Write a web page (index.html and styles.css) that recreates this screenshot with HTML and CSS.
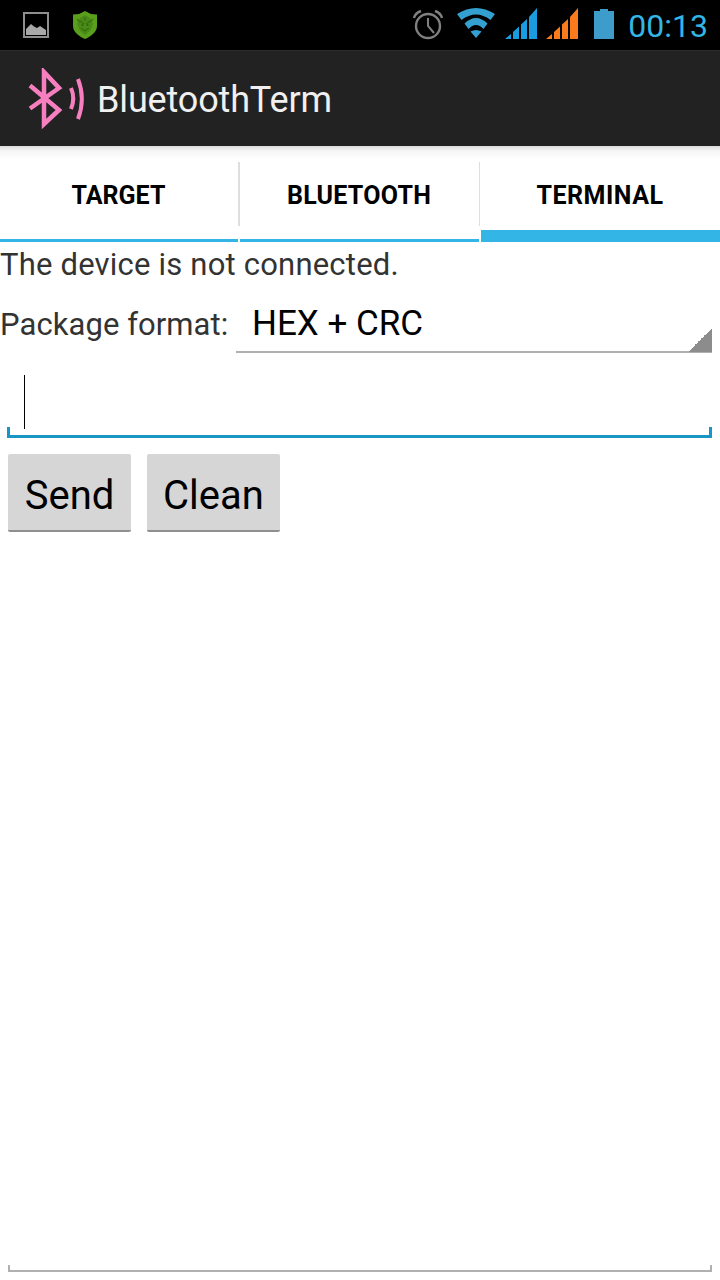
FILE: index.html
```html
<!DOCTYPE html>
<html lang="en">
<head>
<meta charset="utf-8">
<title>BluetoothTerm</title>
<link rel="stylesheet" href="styles.css">
</head>
<body>
<div class="screen">
  <header class="status-bar">
    <svg class="ico-picture" width="28" height="28" viewBox="0 0 28 28"><rect x="2" y="2" width="24" height="24" fill="none" stroke="#8f8f8f" stroke-width="2"/><path d="M4 24V18L9 13L12 15.500L15 17L18 15L21 17L24 19V24Z" fill="#a8a8a8"/></svg>
    <svg class="ico-shield" width="26" height="28" viewBox="0 0 26 28"><path d="M13 0L19 3L25 3.500V15C25 21 19 25.500 13 28C7 25.500 1 21 1 15V3.500L7 3Z" fill="#5a9f1b"/><path d="M13 4L18 7L21 13L18 20L13 24L8 20L5 13L8 7Z" fill="#4a8a18"/><path d="M8 10L12 13M18 10L14 13M9 17L13 20L17 17M13 6V10M5 8L8 11M21 8L18 11" stroke="#37700f" stroke-width="1.200" fill="none"/><circle cx="10.500" cy="14" r="1" fill="#2f6410"/><circle cx="15.500" cy="14" r="1" fill="#2f6410"/></svg>
    <span class="status-spacer"></span>
    <svg class="ico-alarm" width="32" height="32" viewBox="0 0 32 32"><circle cx="16" cy="17" r="12" fill="none" stroke="#808080" stroke-width="2.400"/><path d="M16 9V17L22 24" fill="none" stroke="#808080" stroke-width="2"/><path d="M2 9C3 5 6 3 9 2M30 9C29 5 26 3 23 2" fill="none" stroke="#808080" stroke-width="2.400"/></svg>
    <svg class="ico-wifi" width="38" height="30" viewBox="0 0 38 30"><path d="M0 6Q19 -6 38 6L33.500 12Q19 1 4.500 12Z" fill="#33a0cf"/><path d="M7.500 15.500Q19 4.500 30.500 15.500L26.500 21Q19 13 11.500 21Z" fill="#33a0cf"/><path d="M13.500 23.500Q19 20.500 24.500 23.500L19 30Z" fill="#33a0cf"/></svg>
    <svg class="ico-signal" width="32" height="31" viewBox="0 0 32 31"><path d="M0 31L6 26V31ZM8 31V24L14 18.500V31ZM16 31V16.500L22 11V31ZM24 31V9L32 0V31Z" fill="#1a9de0"/></svg>
    <svg class="ico-signal ico-signal-two" width="32" height="31" viewBox="0 0 32 31"><path d="M0 31L6 26V31ZM8 31V24L14 18.500V31ZM16 31V16.500L22 11V31ZM24 31V9L32 0V31Z" fill="#fb7a1c"/></svg>
    <svg class="ico-battery" width="20" height="30" viewBox="0 0 20 30"><path d="M6 0H14V2H20V30H0V2H6Z" fill="#3d9cc9"/></svg>
    <span class="clock">00:13</span>
  </header>

  <div class="action-bar">
    <svg class="app-icon" width="60" height="62" viewBox="0 0 60 62"><path d="M2 40.500L31 20L16 4V56L31 42L2 17.500" fill="none" stroke="#f87fbf" stroke-width="4.500"/><path d="M43 20C46 27 46 34 43 41" fill="none" stroke="#f87fbf" stroke-width="4"/><path d="M50 11C55 24 55 38 50 51" fill="none" stroke="#f87fbf" stroke-width="4"/></svg>
    <span class="app-title">BluetoothTerm</span>
  </div>

  <nav class="tabs">
    <div class="tab tab-first">TARGET</div>
    <div class="tab tab-second">BLUETOOTH</div>
    <div class="tab tab-active">TERMINAL</div>
  </nav>

  <main class="content">
    <p class="connection">The device is not connected.</p>
    <div class="format-row">
      <span class="format-label">Package format:</span>
      <div class="spinner">
        <span class="spinner-value">HEX + CRC</span>
        <span class="spinner-arrow"></span>
      </div>
    </div>
    <div class="input-field"><span class="caret"></span></div>
    <div class="actions">
      <button class="btn btn-send" type="button">Send</button>
      <button class="btn btn-clean" type="button">Clean</button>
    </div>
    <div class="output-field"></div>
  </main>
</div>
</body>
</html>
```
FILE: styles.css
```css
* { box-sizing: border-box; }
html, body { margin: 0; padding: 0; background: #fff; }
.screen {
  width: 720px;
  height: 1280px;
  overflow: hidden;
  display: flex;
  flex-direction: column;
  font-family: Roboto, "Liberation Sans", sans-serif;
}
.status-bar {
  height: 50px;
  flex: none;
  background: #000;
  display: flex;
  align-items: flex-start;
}
.status-bar svg { flex: none; display: block; }
.ico-picture { margin: 11px 0 0 22px; }
.ico-shield { margin: 11px 0 0 22px; }
.status-spacer { flex: 1; }
.ico-alarm { margin: 9px 0 0 0; }
.ico-wifi { margin: 8px 0 0 13px; }
.ico-signal { margin: 8px 0 0 10px; }
.ico-signal-two { margin-left: 9px; }
.ico-battery { margin: 9px 0 0 16px; }
.clock {
  margin: 7px 12px 0 14px;
  font-size: 32px;
  line-height: 38px;
  color: #33b5e5;
}
.action-bar {
  height: 96px;
  flex: none;
  background: #222;
  border-top: 1px solid #2b2b2b;
  display: flex;
  align-items: center;
  padding-left: 28px;
}
.app-icon { margin-right: 9px; flex: none; }
.app-title {
  font-size: 36px;
  letter-spacing: -0.15px;
  padding-top: 2px;
  color: #f0f0f0;
}
.tabs {
  height: 96px;
  flex: none;
  display: grid;
  grid-template-columns: 240px 240px 240px;
  background: linear-gradient(#dcdcdc 0, #f6f6f6 5px, #fff 14px);
}
.tab {
  display: flex;
  align-items: center;
  justify-content: center;
  padding-top: 2px;
  font-size: 25px;
  font-weight: 700;
  letter-spacing: 0.25px;
  color: #000;
  position: relative;
}
.tab-first { padding-right: 3px; letter-spacing: 0; }
.tab-second { padding-right: 2px; }
.tab-active { letter-spacing: 0.5px; }
.tab::before {
  content: "";
  position: absolute;
  right: 0;
  top: 16px;
  height: 64px;
  width: 2px;
  background: #dedede;
}
.tab-second::before { width: 1px; }
.tab-active::before { display: none; }
.tab::after {
  content: "";
  position: absolute;
  left: 0;
  right: 2px;
  bottom: 0;
  height: 3px;
  background: #33b5e5;
}
.tab-second::after { right: 1px; }
.tab-active::after { left: 1px; right: 0; height: 12px; }
.content {
  flex: 1;
  display: flex;
  flex-direction: column;
  background: #fff;
}
.connection {
  margin: 0;
  padding-top: 5px;
  font-size: 31px;
  letter-spacing: 0.2px;
  line-height: 35px;
  color: #333;
}
.format-row {
  display: flex;
  height: 71px;
  padding: 0 8px 0 0;
}
.format-label {
  width: 236px;
  font-size: 31px;
  letter-spacing: 0.07px;
  line-height: 35px;
  padding-top: 25px;
  color: #333;
}
.spinner {
  flex: 1;
  border-bottom: 2px solid #b0b0b0;
  position: relative;
  padding: 21px 0 0 16px;
}
.spinner-value {
  font-size: 35px;
  line-height: 42px;
  display: block;
  color: #000;
}
.spinner-arrow {
  position: absolute;
  right: 0;
  bottom: -1px;
  width: 24px;
  height: 24px;
  background: linear-gradient(135deg, transparent 50%, #8c8c8c 50%);
}
.input-field {
  height: 85px;
  margin: 0 8px 0 7px;
  padding: 22px 0 0 17px;
  border-bottom: 3px solid #1a96c4;
  position: relative;
}
.input-field::before,
.input-field::after {
  content: "";
  position: absolute;
  bottom: 0;
  width: 3px;
  height: 8px;
  background: #1a96c4;
}
.input-field::before { left: 0; }
.input-field::after { right: 0; }
.caret {
  display: block;
  width: 1px;
  height: 54px;
  background: #000;
}
.actions {
  display: flex;
  gap: 16px;
  margin: 16px 0 0 8px;
}
.btn {
  height: 78px;
  padding: 6px 0 0;
  border: 0;
  border-bottom: 2px solid #8f8f8f;
  border-radius: 2px;
  background: #d6d6d6;
  font-family: Roboto, "Liberation Sans", sans-serif;
  font-size: 40px;
  color: #000;
}
.btn-send { width: 123px; }
.btn-clean { width: 133px; }
.output-field {
  margin: auto 8px 8px;
  height: 7px;
  border: 2px solid #b0b0b0;
  border-top: 0;
}
```
